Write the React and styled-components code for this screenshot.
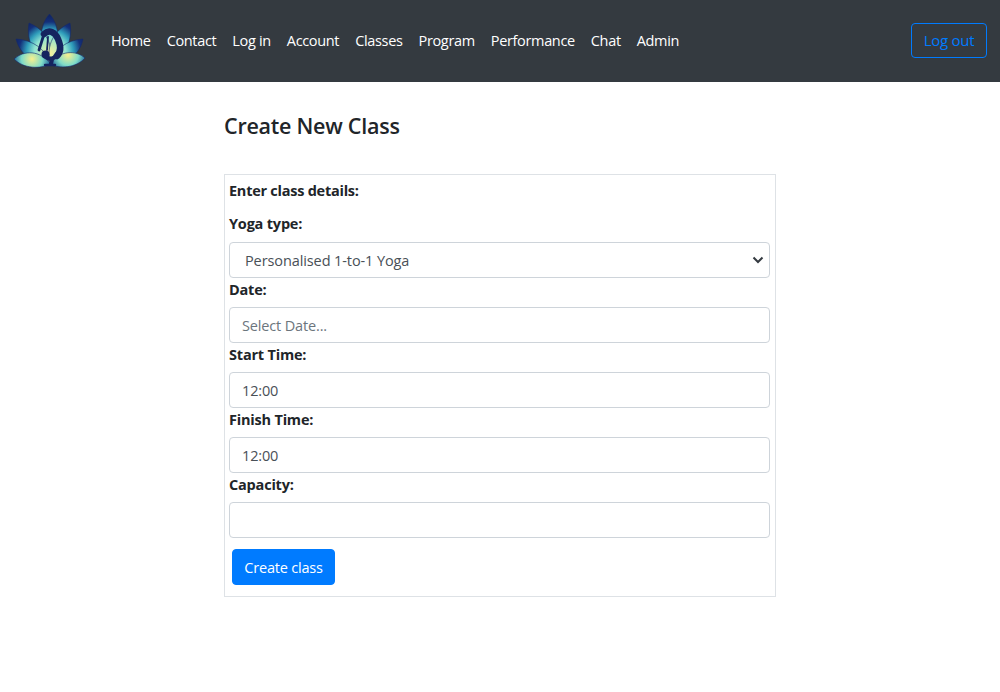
// Create class page - navbar and class form
import React from "react";
import styled, { createGlobalStyle } from "styled-components";

const FONT = `"Open Sans", "Noto Sans", "Liberation Sans", sans-serif`;

const GlobalStyle = createGlobalStyle`
  body {
    margin: 0;
    background: #fff;
    color: #212529;
    font-family: ${FONT};
    font-size: 16px;
  }
`;

const Navbar = styled.nav`
  display: flex;
  align-items: center;
  box-sizing: border-box;
  height: 82px;
  padding: 0 13px 1px 14px;
  background: #343a40;
`;

const Brand = styled.svg`
  display: block;
  width: 72px;
  height: 56px;
  margin-right: 17px;
  flex-shrink: 0;
`;

const NavList = styled.div`
  display: flex;
  flex: 1;
`;

const NavLink = styled.a`
  padding: 8px;
  color: #fff;
  font-size: 14.5px;
  line-height: 24px;
  letter-spacing: -0.34px;
  white-space: nowrap;
`;

const LogoutButton = styled.button`
  width: 76px;
  height: 35px;
  padding: 0 0 2px;
  border: 1px solid #007bff;
  border-radius: 4px;
  background: transparent;
  color: #007bff;
  font-family: ${FONT};
  font-size: 15px;
  letter-spacing: -0.25px;
`;

const Main = styled.main`
  width: 552px;
  margin: 0 auto;
`;

const Title = styled.h1`
  margin: 0;
  padding-top: 29px;
  height: 63px;
  font-size: 21.5px;
  font-weight: 600;
  line-height: 30px;
  letter-spacing: -0.25px;
  color: #212529;
`;

const FormBox = styled.form`
  display: flex;
  flex-direction: column;
  box-sizing: border-box;
  height: 423px;
  padding: 4px 5px 0 4px;
  border: 1px solid #dee2e6;
`;

const Heading = styled.div`
  height: 33px;
  font-size: 14.5px;
  font-weight: 700;
  line-height: 24px;
  letter-spacing: -0.25px;
  color: #212529;
`;

const Label = styled.label`
  display: block;
  height: ${(p) => p.$height || 29}px;
  font-size: 14.5px;
  font-weight: 700;
  line-height: 24px;
  letter-spacing: -0.2px;
  color: #212529;
`;

const SelectWrap = styled.div`
  position: relative;
`;

const Select = styled.select`
  display: block;
  box-sizing: border-box;
  width: 100%;
  height: 36px;
  padding: 0 28px 0 15px;
  border: 1px solid #ced4da;
  border-radius: 4px;
  background: #fff;
  color: #495057;
  font-family: ${FONT};
  font-size: 14.5px;
  letter-spacing: -0.1px;
  appearance: none;
`;

const Chevron = styled.svg`
  position: absolute;
  top: 14px;
  right: 6px;
  width: 12px;
  height: 8px;
  pointer-events: none;
`;

const Input = styled.input`
  display: block;
  box-sizing: border-box;
  width: 100%;
  height: 36px;
  padding: 0 12px;
  border: 1px solid #ced4da;
  border-radius: 4px;
  background: #fff;
  color: #495057;
  font-family: ${FONT};
  font-size: 14.5px;
  letter-spacing: -0.15px;

  &::placeholder {
    color: #6c757d;
    opacity: 1;
  }
`;

const SubmitButton = styled.button`
  align-self: flex-start;
  width: 103px;
  height: 36px;
  margin: 11px 0 0 3px;
  padding: 0;
  border: 1px solid #007bff;
  border-radius: 4px;
  background: #007bff;
  color: #fff;
  font-family: ${FONT};
  font-size: 14.5px;
  letter-spacing: -0.2px;
`;

const links = ["Home", "Contact", "Log in", "Account", "Classes", "Program", "Performance", "Chat", "Admin"];

const Petal = ({ d, fill }) => <path d={d} fill={fill} stroke="#14296a" strokeWidth="0.6" />;

// lotus logo with the yoga figure on top
const Logo = () => (
  <Brand viewBox="14 12 72 56">
    <defs>
      <radialGradient id="petal" gradientUnits="userSpaceOnUse" cx="50" cy="52" r="38">
        <stop offset="0%" stopColor="#f6f09a" />
        <stop offset="42%" stopColor="#8fe3d2" />
        <stop offset="62%" stopColor="#2f9dbb" />
        <stop offset="82%" stopColor="#14307a" />
        <stop offset="100%" stopColor="#10235f" />
      </radialGradient>
      <radialGradient id="lowLeft" gradientUnits="userSpaceOnUse" cx="32" cy="58" r="19">
        <stop offset="0%" stopColor="#f8f08e" />
        <stop offset="55%" stopColor="#7fdcc8" />
        <stop offset="100%" stopColor="#1a5c98" />
      </radialGradient>
      <radialGradient id="lowRight" gradientUnits="userSpaceOnUse" cx="68" cy="54" r="19">
        <stop offset="0%" stopColor="#f8f08e" />
        <stop offset="55%" stopColor="#7fdcc8" />
        <stop offset="100%" stopColor="#1a5c98" />
      </radialGradient>
    </defs>
    <Petal d="M49.5 13 C39 25 38 44 49.5 62 C61 44 60 25 49.5 13Z" fill="url(#petal)" />
    <Petal d="M29 22 C26 40 34 56 50 62 C54 44 46 29 29 22Z" fill="url(#petal)" />
    <Petal d="M70 22 C73 40 65 56 50 62 C46 44 54 29 70 22Z" fill="url(#petal)" />
    <Petal d="M16 38 C20 53 32 63 50 63 C46 48 33 39 16 38Z" fill="url(#petal)" />
    <Petal d="M83 38 C80 53 68 63 50 63 C54 48 67 39 83 38Z" fill="url(#petal)" />
    <Petal d="M14 58 C24 49 40 49 51 63 C40 68 24 68 14 58Z" fill="url(#lowLeft)" />
    <Petal d="M85 57 C76 49 60 49 49 63 C60 68 76 67 85 57Z" fill="url(#lowRight)" />
    <g fill="none" stroke="#15245f" strokeLinecap="round">
      <path d="M44 33 C49 28 55 31 58 38 C61 45 61 51 57 55" strokeWidth="6.5" />
      <path d="M46 56 C50 59 54 58 57 54" strokeWidth="4.5" />
      <path d="M52 58 L51 63" strokeWidth="4" />
      <path d="M44 33 L39 49" strokeWidth="2.8" />
      <path d="M48 36 L47 49" strokeWidth="1.8" />
      <path d="M45 64 L55 64" strokeWidth="2.4" />
    </g>
    <circle cx="45.5" cy="53.5" r="4" fill="#15245f" />
  </Brand>
);

const App = () => {
  return (
    <>
      <GlobalStyle />
      <Navbar>
        <Logo />
        <NavList>
          {links.map((link) => (
            <NavLink key={link}>{link}</NavLink>
          ))}
        </NavList>
        <LogoutButton type="button">Log out</LogoutButton>
      </Navbar>
      <Main>
        <Title>Create New Class</Title>
        <FormBox onSubmit={(e) => e.preventDefault()}>
          <Heading>Enter class details:</Heading>
          <Label $height={30}>Yoga type:</Label>
          <SelectWrap>
            <Select defaultValue="personal">
              <option value="personal">Personalised 1-to-1 Yoga</option>
            </Select>
            <Chevron viewBox="0 0 12 8">
              <path d="M1.5 1.5 L6 6 L10.5 1.5" fill="none" stroke="#343a40" strokeWidth="2" />
            </Chevron>
          </SelectWrap>
          <Label>Date:</Label>
          <Input placeholder="Select Date..." />
          <Label>Start Time:</Label>
          <Input defaultValue="12:00" />
          <Label>Finish Time:</Label>
          <Input defaultValue="12:00" />
          <Label>Capacity:</Label>
          <Input />
          <SubmitButton type="submit">Create class</SubmitButton>
        </FormBox>
      </Main>
    </>
  );
};

export default App;
